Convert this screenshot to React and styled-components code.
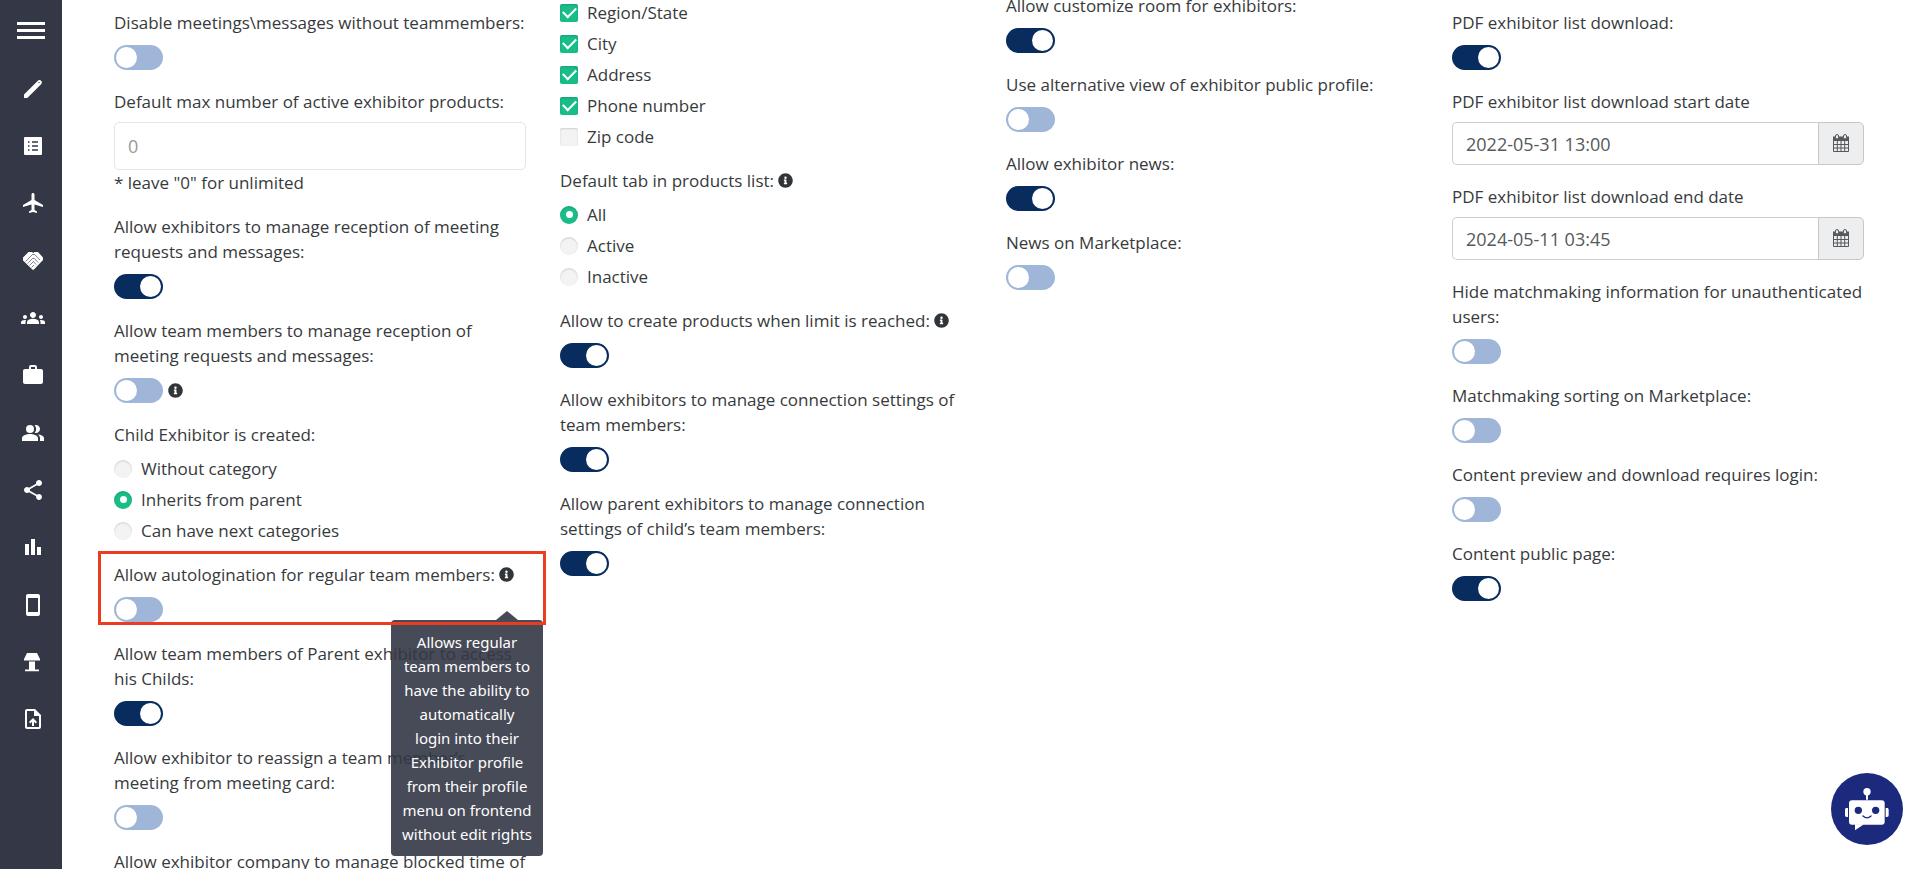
import React, { useId, useState } from "react";
import styled, { createGlobalStyle } from "styled-components";
import {
  MdLocalAirport,
  MdGroups,
  MdWork,
  MdPeopleAlt,
  MdShare,
  MdStayPrimaryPortrait,
  MdUploadFile,
} from "react-icons/md";
import { FaInfoCircle } from "react-icons/fa";

const GlobalStyle = createGlobalStyle`
  * {
    box-sizing: border-box;
  }

  body {
    margin: 0;
    background-color: #fff;
    color: #373a3c;
    font-family: "Open Sans", "Noto Sans", sans-serif;
    font-size: 17px;
    line-height: 25px;
  }
`;

const StPage = styled.div`
  display: flex;
  height: 100vh;
  overflow: hidden;
`;

const StSidebar = styled.nav`
  flex: 0 0 62px;
  background-color: #343745;
`;

const StMenuButton = styled.button`
  display: flex;
  flex-direction: column;
  justify-content: center;
  gap: 4px;
  width: 100%;
  height: 60px;
  padding: 0 17px;
  border: none;
  background: none;
  cursor: pointer;

  span {
    height: 3px;
    background-color: #fff;
  }
`;

const StNavList = styled.ul`
  display: grid;
  grid-template-rows: repeat(12, 1fr);
  height: 688px;
  margin: 0;
  padding: 0 0 0 4px;
  list-style: none;
`;

const StNavLink = styled.a`
  display: flex;
  align-items: center;
  justify-content: center;
  height: 100%;
  color: #fff;

  svg {
    width: 24px;
    height: 24px;
  }
`;

const StMain = styled.main`
  flex: 1;
  display: grid;
  grid-template-columns: repeat(4, minmax(0, 1fr));
  align-items: start;
  column-gap: 34px;
  margin-top: -8px;
  padding: 0 56px 0 52px;
`;

const StColumn = styled.div`
  display: flex;
  flex-direction: column;
  gap: 19px;
  padding-top: ${({ $top }) => $top}px;
`;

const StField = styled.div`
  position: relative;
  display: flex;
  flex-direction: column;
  gap: ${({ $gap }) => $gap || 10}px;
`;

const StLabel = styled.label`
  display: block;
`;

const StInfoButton = styled.button`
  display: inline-flex;
  padding: 0;
  border: none;
  background: none;
  color: #323538;
  font-size: 15px;
  vertical-align: -1px;
  cursor: help;
`;

const StSwitchRow = styled.div`
  display: flex;
  align-items: center;
  gap: 5px;
`;

const StSwitch = styled.input`
  appearance: none;
  display: flex;
  width: 49px;
  height: 25px;
  margin: 0;
  padding: 2px;
  border-radius: 13px;
  background-color: #9fb6d8;
  cursor: pointer;

  &::before {
    content: "";
    width: 21px;
    height: 21px;
    border-radius: 50%;
    background-color: #fff;
  }

  &:checked {
    justify-content: flex-end;
    background-color: #072c5d;
  }
`;

const StOptions = styled.div`
  display: flex;
  flex-direction: column;
  gap: 6px;
`;

const StOption = styled.label`
  display: flex;
  align-items: center;
  gap: 9px;
`;

const StTick = styled.input`
  appearance: none;
  display: grid;
  place-items: center;
  width: 18px;
  height: 18px;
  margin: 0;
  border-radius: ${({ type }) => (type === "radio" ? "50%" : "2px")};
  background-color: #f3f3f3;
  box-shadow: inset 0 1px 2px rgba(0, 0, 0, 0.15);

  &:checked {
    background-color: #18bd87;
  }

  &[type="radio"]:checked::before {
    content: "";
    width: 7px;
    height: 7px;
    border-radius: 50%;
    background-color: #fff;
  }

  &[type="checkbox"]:checked::before {
    content: "";
    width: 11px;
    height: 6px;
    margin-bottom: 3px;
    border: solid #fff;
    border-width: 0 0 2px 2px;
    transform: rotate(-45deg);
  }
`;

const StTextInput = styled.input`
  width: 100%;
  min-width: 0;
  height: 48px;
  padding: 0 13px;
  border: 1px solid #e3e5e7;
  border-radius: 5px;
  color: #55595c;
  font-family: inherit;
  font-size: 18px;

  &::placeholder {
    color: #999;
    opacity: 1;
  }
`;

const StDateGroup = styled.div`
  display: flex;

  ${StTextInput} {
    height: 43px;
    border-color: #ccced0;
    border-right: none;
    border-radius: 5px 0 0 5px;
  }
`;

const StDateButton = styled.button`
  flex: 0 0 46px;
  display: flex;
  align-items: center;
  justify-content: center;
  padding: 0;
  border: 1px solid #c5c7c9;
  border-radius: 0 5px 5px 0;
  background-color: #eceeef;
  color: #55595c;
`;

const StHighlight = styled.div`
  position: absolute;
  z-index: 2;
  inset: -11px -20px -3px -16px;
  border: 3px solid #ea3c20;
  pointer-events: none;
`;

const StTooltip = styled.div`
  position: absolute;
  z-index: 1;
  top: 58px;
  right: -17px;
  width: 152px;
  padding: 10px;
  border-radius: 4px;
  background-color: #343745;
  color: #fff;
  font-family: "Noto Sans", sans-serif;
  font-size: 15px;
  line-height: 24px;
  text-align: center;
  opacity: 0.9;

  &::before {
    content: "";
    position: absolute;
    right: 25px;
    bottom: 100%;
    border: 11px solid transparent;
    border-top: none;
    border-bottom: 9px solid #343745;
  }
`;

const StChatButton = styled.button`
  position: fixed;
  right: 17px;
  bottom: 24px;
  width: 72px;
  height: 72px;
  padding: 0;
  border: none;
  border-radius: 50%;
  background-color: #1b2a7d;
  cursor: pointer;

  svg {
    display: block;
  }
`;

const PencilIcon = () => (
  <svg viewBox="0 0 24 24" fill="currentColor">
    <path d="M3 21v-3.500L16.600 3.900c1-1 2.400-1.200 3.500-.2 1 1.100 1 2.500 0 3.500L6.300 21z" />
    <circle cx="18" cy="5.600" r="0.700" fill="#343745" />
  </svg>
);

const ListIcon = () => (
  <svg viewBox="0 0 24 24">
    <rect x="3" y="3" width="18" height="18" rx="1" fill="currentColor" />
    <path
      d="M7 8h1.500M7 12h1.500M7 16h1.500M11 8h6M11 12h6M11 16h6"
      stroke="#343745"
      strokeWidth="1.300"
    />
  </svg>
);

const HandshakeIcon = () => (
  <svg viewBox="0 0 24 24">
    <path
      d="M7.500 3H11l1.200 1L13.500 3H17l5 5.500V11l-8.800 9.200c-.7.700-1.500.7-2.200 0L2 11.500V8.500z"
      fill="currentColor"
    />
    <path
      d="M4.500 12.500l7-7 2.200 0L19 11M6.500 14.500l5-5 2 0 3.500 4M8.500 16.500l4-4 2.500 3M10.500 18.500l2.500-2.500"
      fill="none"
      stroke="#343745"
      strokeWidth="0.600"
    />
  </svg>
);

const ChartIcon = () => (
  <svg viewBox="0 0 24 24" fill="currentColor">
    <path d="M4 9h4v11H4zM10 4h4v16h-4zM16 12h4v8h-4z" />
  </svg>
);

const LampIcon = () => (
  <svg viewBox="0 0 24 24" fill="currentColor">
    <path d="M6 3h10l3 6v1.500H3V9zM8 11.500h6v8H8zM4 19.500h14v1.800H4z" />
  </svg>
);

const CalendarIcon = () => (
  <svg width="18" height="19" viewBox="0 0 18 19" fill="none">
    <path
      d="M1.500 7v10.500h15V7M1 10.500h16M1 14h16M5.300 7v10.500M9 7v10.500M12.700 7v10.500"
      stroke="currentColor"
      strokeWidth="1"
    />
    <path d="M1 2.500h16V7H1z" fill="currentColor" />
    <rect x="3.500" y="0.500" width="3" height="4.500" rx="1.500" fill="#eceeef" stroke="currentColor" />
    <rect x="11.500" y="0.500" width="3" height="4.500" rx="1.500" fill="#eceeef" stroke="currentColor" />
  </svg>
);

const RobotIcon = () => (
  <svg width="72" height="72" viewBox="0 0 216 216">
    <g fill="#fff">
      <circle cx="108" cy="56" r="11" />
      <path d="M105 64h6v16h-6z" />
      <rect x="54" y="82" width="107" height="73" rx="9" />
      <path d="M51 105v27h-4c-3 0-5-2-5-5v-17c0-3 2-5 5-5zM164 105v27h4c3 0 5-2 5-5v-17c0-3-2-5-5-5z" />
      <path d="M72 154v18l27-18z" />
    </g>
    <circle cx="82" cy="112" r="11" fill="#1b2a7d" />
    <circle cx="134" cy="112" r="11" fill="#1b2a7d" />
    <path
      d="M96 129q12 11 24 0"
      fill="none"
      stroke="#1b2a7d"
      strokeWidth="4"
      strokeLinecap="round"
    />
  </svg>
);

const navItems = [
  { name: "Edit", icon: <PencilIcon /> },
  { name: "Lists", icon: <ListIcon /> },
  { name: "Travel", icon: <MdLocalAirport /> },
  { name: "Matchmaking", icon: <HandshakeIcon /> },
  { name: "Groups", icon: <MdGroups /> },
  { name: "Exhibitors", icon: <MdWork /> },
  { name: "People", icon: <MdPeopleAlt /> },
  { name: "Share", icon: <MdShare /> },
  { name: "Statistics", icon: <ChartIcon /> },
  { name: "Mobile", icon: <MdStayPrimaryPortrait /> },
  { name: "Stands", icon: <LampIcon /> },
  { name: "Upload", icon: <MdUploadFile /> },
];

function InfoIcon() {
  return (
    <StInfoButton type="button" aria-label="More information">
      <FaInfoCircle />
    </StInfoButton>
  );
}

function SwitchField({ label, on, info, infoAfter, highlighted, tooltip }) {
  const id = useId();
  const [checked, setChecked] = useState(!!on);

  return (
    <StField>
      <div>
        <label htmlFor={id}>{label}</label> {info && <InfoIcon />}
      </div>
      <StSwitchRow>
        <StSwitch
          id={id}
          type="checkbox"
          role="switch"
          checked={checked}
          onChange={(e) => setChecked(e.target.checked)}
        />
        {infoAfter && <InfoIcon />}
      </StSwitchRow>
      {tooltip && <StTooltip role="tooltip">{tooltip}</StTooltip>}
      {highlighted && <StHighlight />}
    </StField>
  );
}

function OptionsField({ label, type, options, selected, info }) {
  const name = useId();

  return (
    <StField $gap={9} role="group" aria-label={label}>
      {label && (
        <div>
          {label} {info && <InfoIcon />}
        </div>
      )}
      <StOptions>
        {options.map((option) => (
          <StOption key={option}>
            <StTick
              type={type}
              name={name}
              defaultChecked={selected.includes(option)}
            />
            {option}
          </StOption>
        ))}
      </StOptions>
    </StField>
  );
}

function NumberField() {
  return (
    <StField $gap={8}>
      <StLabel htmlFor="max-products">
        Default max number of active exhibitor products:
      </StLabel>
      <div>
        <StTextInput id="max-products" type="text" placeholder="0" />
        <div>* leave "0" for unlimited</div>
      </div>
    </StField>
  );
}

function DateField({ label, value }) {
  const id = useId();

  return (
    <StField $gap={8}>
      <StLabel htmlFor={id}>{label}</StLabel>
      <StDateGroup>
        <StTextInput id={id} type="text" defaultValue={value} />
        <StDateButton type="button" aria-label="Open calendar">
          <CalendarIcon />
        </StDateButton>
      </StDateGroup>
    </StField>
  );
}

function App() {
  return (
    <>
      <GlobalStyle />
      <StPage>
        <StSidebar>
          <StMenuButton type="button" aria-label="Menu">
            <span />
            <span />
            <span />
          </StMenuButton>
          <StNavList>
            {navItems.map((item) => (
              <li key={item.name}>
                <StNavLink href="#" aria-label={item.name}>
                  {item.icon}
                </StNavLink>
              </li>
            ))}
          </StNavList>
        </StSidebar>

        <StMain>
          <StColumn $top={18}>
            <SwitchField label="Disable meetings\messages without teammembers:" />
            <NumberField />
            <SwitchField
              label="Allow exhibitors to manage reception of meeting requests and messages:"
              on
            />
            <SwitchField
              label="Allow team members to manage reception of meeting requests and messages:"
              infoAfter
            />
            <OptionsField
              label="Child Exhibitor is created:"
              type="radio"
              options={[
                "Without category",
                "Inherits from parent",
                "Can have next categories",
              ]}
              selected={["Inherits from parent"]}
            />
            <SwitchField
              label="Allow autologination for regular team members:"
              info
              highlighted
              tooltip="Allows regular team members to have the ability to automatically login into their Exhibitor profile from their profile menu on frontend without edit rights"
            />
            <SwitchField
              label="Allow team members of Parent exhibitor to access his Childs:"
              on
            />
            <SwitchField label="Allow exhibitor to reassign a team member’s meeting from meeting card:" />
            <SwitchField label="Allow exhibitor company to manage blocked time of" />
          </StColumn>

          <StColumn $top={8}>
            <OptionsField
              type="checkbox"
              options={[
                "Region/State",
                "City",
                "Address",
                "Phone number",
                "Zip code",
              ]}
              selected={["Region/State", "City", "Address", "Phone number"]}
            />
            <OptionsField
              label="Default tab in products list:"
              type="radio"
              info
              options={["All", "Active", "Inactive"]}
              selected={["All"]}
            />
            <SwitchField
              label="Allow to create products when limit is reached:"
              info
              on
            />
            <SwitchField
              label="Allow exhibitors to manage connection settings of team members:"
              on
            />
            <SwitchField
              label="Allow parent exhibitors to manage connection settings of child’s team members:"
              on
            />
          </StColumn>

          <StColumn $top={1}>
            <SwitchField label="Allow customize room for exhibitors:" on />
            <SwitchField label="Use alternative view of exhibitor public profile:" />
            <SwitchField label="Allow exhibitor news:" on />
            <SwitchField label="News on Marketplace:" />
          </StColumn>

          <StColumn $top={18}>
            <SwitchField label="PDF exhibitor list download:" on />
            <DateField
              label="PDF exhibitor list download start date"
              value="2022-05-31 13:00"
            />
            <DateField
              label="PDF exhibitor list download end date"
              value="2024-05-11 03:45"
            />
            <SwitchField label="Hide matchmaking information for unauthenticated users:" />
            <SwitchField label="Matchmaking sorting on Marketplace:" />
            <SwitchField label="Content preview and download requires login:" />
            <SwitchField label="Content public page:" on />
          </StColumn>
        </StMain>

        <StChatButton type="button" aria-label="Open chat">
          <RobotIcon />
        </StChatButton>
      </StPage>
    </>
  );
}

export default App;
